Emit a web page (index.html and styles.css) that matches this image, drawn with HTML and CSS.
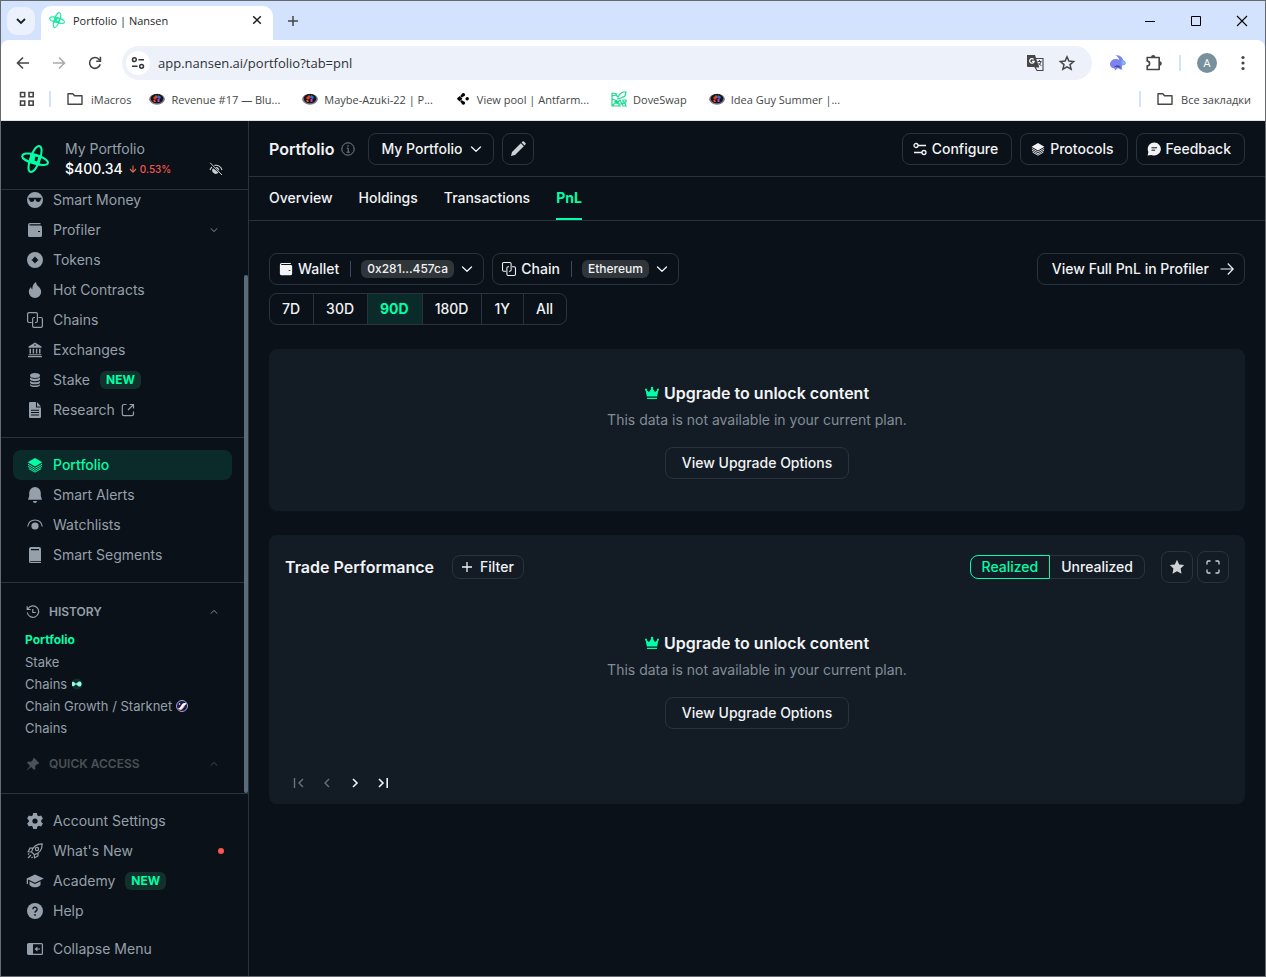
FILE: index.html
```html
<!DOCTYPE html>
<html lang="en">
<head>
<meta charset="utf-8">
<meta name="viewport" content="width=device-width, initial-scale=1">
<title>Portfolio | Nansen</title>
<link rel="stylesheet" href="styles.css">
</head>
<body>
<svg class="sprite" aria-hidden="true">
  <symbol id="logo" viewBox="0 0 28 28">
    <g fill="none" stroke="currentColor" stroke-width="2">
      <path d="M18.6 1.2C21.5 2 20.9 8 18.9 14.500C16.800 21.500 12.500 27.800 9.400 26.900C6.500 26 7.200 20 9.300 13.500C11.400 6.500 15.500 .3 18.600 1.200Z"/>
      <path d="M1.200 11C1.700 8 8 7.900 14.600 9.800C21.400 11.700 27.500 15.300 26.900 18.100C26.300 20.700 19.700 20.400 13.200 18.500C6.400 16.600 .700 13.500 1.200 11Z"/>
    </g>
    <path fill="currentColor" fill-rule="evenodd" d="M9.500 8.600L19.600 10.900L18.300 20L8 17.500ZM14.500 11.500L13.500 15.500L16 16.400L17.200 12.300Z"/>
  </symbol>
  <symbol id="folder" viewBox="0 0 16 16"><path d="M1 2.800h4.800l1.700 2H15v8.400H1z" fill="none" stroke="currentColor" stroke-width="1.400" stroke-linejoin="round"/></symbol>
  <symbol id="orb" viewBox="0 0 16 12"><ellipse cx="8" cy="6.200" rx="7.800" ry="5.500" fill="#777b80"/><ellipse cx="8" cy="5.600" rx="6.300" ry="4.700" fill="#17141a"/><path d="M4 5l3-3 2 2-3 3z" fill="#ef3b24"/><path d="M9 2l3 2-1 2-3-1z" fill="#2278d4"/><path d="M8.500 6l2 0 0 3-2 0z" fill="#c03cd6"/><path d="M4 7l2 0 1 2-2 0z" fill="#e2572e"/></symbol>
  <symbol id="chev-down" viewBox="0 0 12 12"><path d="M1.500 4l4.500 4.300L10.500 4" fill="none" stroke="currentColor" stroke-width="1.300" stroke-linecap="round" stroke-linejoin="round"/></symbol>
  <symbol id="chev-up" viewBox="0 0 12 12"><path d="M1.500 8l4.500-4.300L10.500 8" fill="none" stroke="currentColor" stroke-width="1.300" stroke-linecap="round" stroke-linejoin="round"/></symbol>
  <symbol id="wallet" viewBox="0 0 16 16"><path fill="currentColor" fill-rule="evenodd" d="M3 1h10.500v1.200H3a.5.5 0 0 0 0 1.200h10.500A1.500 1.500 0 0 1 15 4.900v8.600a1.500 1.500 0 0 1-1.500 1.500h-11A1.500 1.500 0 0 1 1 13.500V3a2 2 0 0 1 2-2zm8 8v1h2V9z"/></symbol>
  <symbol id="chains" viewBox="0 0 16 16"><g fill="none" stroke="currentColor" stroke-width="1.200"><path d="M4.800 10.500H2A1.400 1.400 0 0 1 .6 9.100V2A1.400 1.400 0 0 1 2 .6h7A1.400 1.400 0 0 1 10.400 2v7.100a1.400 1.400 0 0 1-1.400 1.400H8"/><path d="M11.500 5.500H14A1.400 1.400 0 0 1 15.400 6.900V14a1.400 1.400 0 0 1-1.400 1.400H7A1.400 1.400 0 0 1 5.600 14V6.900A1.400 1.400 0 0 1 7 5.500h1"/></g></symbol>
  <symbol id="layers" viewBox="0 0 16 16"><path fill="currentColor" d="M8 1l7.300 4.300L8 9.600.7 5.300z"/><g fill="none" stroke="currentColor" stroke-width="1"><path d="M1 7.300l7 4.100 7-4.100M1 9.300l7 4.100 7-4.100M1.800 11.600l6.200 3.500 6.200-3.500"/></g></symbol>
  <symbol id="crown" viewBox="0 0 14 14"><path fill="currentColor" d="M1.700 4.300L4 6 6.300 2.700a1.100 1.100 0 1 1 1.400 0L10 6l2.300-1.700a1 1 0 1 1 1 .3L12.200 10.500H1.800L.7 4.600a1 1 0 1 1 1-.3zM2 11.700h10V13H2z"/></symbol>
</svg>

<div class="window">
  <header class="browser">
    <div class="tabstrip">
      <button class="tab-search" aria-label="Search tabs"><svg class="i12" viewBox="0 0 12 12"><path d="M2 4l4 4 4-4" fill="none" stroke="#1f1f1f" stroke-width="1.800"/></svg></button>
      <div class="tab">
        <svg class="i16 brand-fav"><use href="#logo"/></svg>
        <span class="tab-title">Portfolio | Nansen</span>
        <button class="tab-close" aria-label="Close tab"><svg class="i12" viewBox="0 0 12 12"><path d="M2.200 2.200l7.600 7.600M9.800 2.200l-7.600 7.600" stroke="#1f1f1f" stroke-width="1.500"/></svg></button>
      </div>
      <button class="new-tab" aria-label="New tab"><svg class="i12" viewBox="0 0 12 12"><path d="M6 1v10M1 6h10" stroke="#444746" stroke-width="1.500"/></svg></button>
      <div class="win-controls">
        <button aria-label="Minimize"><svg class="i12" viewBox="0 0 12 12"><path d="M1 6.500h10" stroke="#000"/></svg></button>
        <button aria-label="Maximize"><svg class="i12" viewBox="0 0 12 12"><path d="M1.500 1.500h9v9h-9z" fill="none" stroke="#000"/></svg></button>
        <button aria-label="Close"><svg class="i12" viewBox="0 0 12 12"><path d="M1 1l10 10M11 1L1 11" stroke="#000" stroke-width="1.100"/></svg></button>
      </div>
    </div>
    <div class="toolbar">
      <button class="tool" aria-label="Back"><svg class="i16" viewBox="0 0 16 16"><path d="M14 8H3M8 2.500L2.500 8 8 13.500" fill="none" stroke="currentColor" stroke-width="1.600"/></svg></button>
      <button class="tool dim" aria-label="Forward"><svg class="i16" viewBox="0 0 16 16"><path d="M2 8h11M8 2.500L13.500 8 8 13.500" fill="none" stroke="currentColor" stroke-width="1.600"/></svg></button>
      <button class="tool" aria-label="Reload"><svg class="i16" viewBox="0 0 16 16"><path d="M13.200 9.200A5.400 5.400 0 1 1 12.300 4.700L13 5.500" fill="none" stroke="currentColor" stroke-width="1.600"/><path d="M13.400 1.800v4.400H9.200" fill="none" stroke="currentColor" stroke-width="1.600"/></svg></button>
      <div class="address">
        <button class="site-info" aria-label="Site information"><svg class="i14" viewBox="0 0 14 14"><g fill="none" stroke="#333" stroke-width="1.500"><circle cx="3.400" cy="3.700" r="1.900"/><path d="M7.500 3.700h5.500M1 10.300h5.500"/><circle cx="10.600" cy="10.300" r="1.900"/></g></svg></button>
        <input type="text" aria-label="Address" value="app.nansen.ai/portfolio?tab=pnl">
        <button class="tool" aria-label="Translate"><svg class="i18" viewBox="0 0 18 18"><path d="M1 1h8l4 12H2a1 1 0 0 1-1-1z" fill="#444746"/><path d="M9.500 4.500H17v12h-6l-2-3.500h3.500z" fill="#eef2fb" stroke="#444746" stroke-width="1.100"/><path d="M7.600 5.300A2.300 2.300 0 1 0 8.200 7.400H6" fill="none" stroke="#fff" stroke-width="1.200"/><path d="M11.500 7.500h4M13.500 6v1.500M15 7.500c-.5 2.500-2 3.500-3 4M12.500 9l3 3" fill="none" stroke="#444746"/></svg></button>
        <button class="tool" aria-label="Bookmark this tab"><svg class="i18" viewBox="0 0 18 18"><path d="M9 2.800l1.900 4.300 4.700.4-3.600 3.100 1.100 4.600L9 12.800l-4.100 2.400L6 10.600 2.400 7.500l4.700-.4z" fill="none" stroke="currentColor" stroke-width="1.500"/></svg></button>
      </div>
      <button class="tool ext" aria-label="Wallet extension"><svg class="i18" viewBox="0 0 18 18"><path d="M6.500 1.200C11 .8 13.500 3 14.200 6.200c1.700.4 2.700 1.700 2.500 3.500-.8 1.300-2 1.800-3.400 1.600-.6 1.500-.7 3 .2 4.200h-2.300c-.5-.7-1.200-1.200-2.200-1.300-1.300 0-1.700 1.800-3.300 2.300.3-.9.200-1.400-.3-1.900C2.800 14 .6 12.400 1 9.300c.7-2.700 3-4.600 5.800-4.400 1.300.1 2.600.4 3.500 1C9.700 4 8.500 2.400 6.500 1.200z" fill="#7b84ef"/><path d="M12.500 6.500c1.600-.4 3.800.6 4.100 2.800-.7 1.600-2.500 2.100-4 1.300z" fill="#7db6ee"/><path d="M5 13c1.500-1.600 4-2.300 6-1l.6 2.300C9.500 12.800 7.300 13.500 5 13z" fill="#4c4bb0"/></svg></button>
      <button class="tool puzzle" aria-label="Extensions"><svg class="i18" viewBox="0 0 18 18"><path d="M2.200 3.500H14.200V15.500H2.200V11.900a2.200 2.200 0 0 0 0-4.800z" fill="none" stroke="currentColor" stroke-width="1.600" stroke-linejoin="round"/><path d="M6 3.200a2.200 2.200 0 0 1 4.400 0zM14.600 7.300a2.200 2.200 0 0 1 0 4.400z" fill="currentColor"/></svg></button>
      <span class="v-rule"></span>
      <button class="avatar" aria-label="Profile">A</button>
      <button class="tool menu-dots" aria-label="Chrome menu"><svg class="i18" viewBox="0 0 18 18"><g fill="currentColor"><circle cx="9" cy="3.500" r="1.600"/><circle cx="9" cy="9" r="1.600"/><circle cx="9" cy="14.500" r="1.600"/></g></svg></button>
    </div>
    <nav class="bookmarks" aria-label="Bookmarks">
      <button class="apps" aria-label="Apps"><svg class="i16" viewBox="0 0 16 16"><g fill="none" stroke="#444746" stroke-width="1.600"><path d="M1.500 1.500h4.200v4.200H1.500zM10 1.500h4.200v4.200H10zM1.500 10h4.200v4.200H1.500zM10 10h4.200v4.200H10z"/></g></svg></button>
      <span class="v-rule"></span>
      <a class="bm first" href="#"><svg class="i16"><use href="#folder"/></svg>iMacros</a>
      <a class="bm" href="#"><svg class="orb"><use href="#orb"/></svg>Revenue #17 — Blu...</a>
      <a class="bm" href="#"><svg class="orb"><use href="#orb"/></svg>Maybe-Azuki-22 | P...</a>
      <a class="bm" href="#"><svg class="i16" viewBox="0 0 16 16"><path d="M8.300 3.600L6 5.800M6 9.800l2.300 2.200" stroke="#000" stroke-width="2.400"/><path d="M1.800 7.800L4.600 5l2.800 2.800-2.800 2.800z" fill="#000"/><circle cx="8.300" cy="3.700" r="1.800"/><circle cx="8.300" cy="12" r="1.800"/><circle cx="12.200" cy="7.800" r="1.700"/></svg>View pool | Antfarm...</a>
      <a class="bm" href="#"><svg class="i16" viewBox="0 0 16 16"><g fill="none" stroke="#1bd991" stroke-width="1.200"><path d="M1 2v13h9M1 2l5 1M1 5l4-1 2 2 2-3 3-2h3l-1 4-4 2-4 1M1 8l3 1 3 2 2-2 2 4h-3l-3-2-4 4M12 9h3v2h-3zM11 13l3-1 1 3h-3zM8 13v2"/></g><path d="M3 10l3-1 2 3-3 1z" fill="#1bd991"/></svg>DoveSwap</a>
      <a class="bm" href="#"><svg class="orb"><use href="#orb"/></svg>Idea Guy Summer |...</a>
      <span class="v-rule push"></span>
      <a class="bm last" href="#"><svg class="i16"><use href="#folder"/></svg>Все закладки</a>
    </nav>
  </header>

  <div class="app">
    <aside class="sidebar">
      <div class="account">
        <svg class="brand"><use href="#logo"/></svg>
        <div class="account-text">
          <div class="account-name">My Portfolio</div>
          <div class="account-value"><strong>$400.34</strong>
            <svg class="i8" viewBox="0 0 8 8"><path d="M4 .5v6.500M1 4l3 3.200L7 4" fill="none" stroke="#e0684a" stroke-width="1.100"/></svg>
            <span class="change">0.53%</span></div>
        </div>
        <button class="hide-balance" aria-label="Hide balance"><svg class="i14" viewBox="0 0 14 14"><path d="M1 8a6.500 6.500 0 0 1 2-3M5.500 3.400A6.200 6.200 0 0 1 13 8" fill="none" stroke="#c9ced3" stroke-width="1.100"/><path d="M4.100 6.200A3.200 3.200 0 1 0 9.500 10.600z" fill="#c9ced3"/><path d="M6.500 5.200A3 3 0 0 1 10.200 8.800z" fill="#c9ced3"/><path d="M1.200.8L13 13" stroke="#c9ced3"/></svg></button>
      </div>

      <div class="scroller">
        <nav class="group clipped">
          <a class="row" href="#"><svg class="i16" viewBox="0 0 16 16"><path fill="currentColor" fill-rule="evenodd" d="M8 0a8 8 0 1 1 0 16A8 8 0 0 1 8 0zM1.600 5.700v1.500h.7C2.500 9 3.300 10 4.800 10 6.400 10 7.200 9 7.500 7.200h1C8.800 9 9.600 10 11.200 10c1.500 0 2.300-1 2.500-2.800h.7V5.700z"/></svg>Smart Money</a>
          <a class="row" href="#"><svg class="i16"><use href="#wallet"/></svg>Profiler<svg class="i8 end"><use href="#chev-down"/></svg></a>
          <a class="row" href="#"><svg class="i16" viewBox="0 0 16 16"><path fill="currentColor" fill-rule="evenodd" d="M8 0a8 8 0 1 1 0 16A8 8 0 0 1 8 0zm0 4.200C7.200 6.200 6.200 7.200 4.200 8c2 .8 3 1.800 3.800 3.800.8-2 1.800-3 3.800-3.800-2-.8-3-1.800-3.800-3.800z"/><circle cx="8" cy="8" r="2.400" fill="#0b1118"/></svg>Tokens</a>
          <a class="row" href="#"><svg class="i16" viewBox="0 0 16 16"><path fill="currentColor" d="M9 0c.3 2.200 1.200 3.300 2.500 4.600C13.200 6.300 14.200 8 14.200 10A6.200 6.200 0 0 1 8 16a6.200 6.200 0 0 1-6.200-6.200C1.800 8 2.700 6.300 4 5c.2 1.200.6 1.900 1.300 2.500C5.200 4.500 6.300 1.600 9 0z"/></svg>Hot Contracts</a>
          <a class="row" href="#"><svg class="i16"><use href="#chains"/></svg>Chains</a>
          <a class="row" href="#"><svg class="i16" viewBox="0 0 16 16"><path fill="currentColor" fill-rule="evenodd" d="M8 .5l6.500 4v1.300h-13V4.500zm0 1.800a.8.8 0 1 0 0 1.600.8.8 0 0 0 0-1.600zM2.500 6.800h1.500v4.700H2.500zM5.700 6.800h1.400v4.700H5.700zM8.900 6.800h1.400v4.700H8.900zM12 6.800h1.500v4.700H12zM1.700 12.200h12.600v1H1.700zM1 14h14v1.200H1z"/></svg>Exchanges</a>
          <a class="row" href="#"><svg class="i16" viewBox="0 0 16 16"><g fill="currentColor"><ellipse cx="8" cy="3.400" rx="5" ry="2.500"/><path d="M3 5.500c2 1.700 8 1.700 10 0v1.700c0 2.600-10 2.600-10 0zM3 9c2 1.700 8 1.700 10 0v1.400c0 2.600-10 2.600-10 0zM3 12.200c2 1.700 8 1.700 10 0v.8c0 2.700-10 2.700-10 0z"/></g></svg>Stake<span class="badge">NEW</span></a>
          <a class="row" href="#"><svg class="i16" viewBox="0 0 16 16"><path fill="currentColor" fill-rule="evenodd" d="M3.300 0H9v5.500h5v9.200a1.300 1.300 0 0 1-1.300 1.300H3.300A1.300 1.300 0 0 1 2 14.700V1.300A1.300 1.300 0 0 1 3.300 0zM10 0l4 4.500h-4zM4 7.700v1h8v-1zm0 2.400v1h8v-1zm0 2.400v1h8v-1z"/></svg>Research<svg class="i14 ext-link" viewBox="0 0 14 14"><g fill="none" stroke="currentColor" stroke-width="1.200"><path d="M5.500 1.500H3A1.700 1.700 0 0 0 1.300 3.200V11A1.700 1.700 0 0 0 3 12.700h7.800A1.700 1.700 0 0 0 12.500 11V8.500M8.500 1.500h4v4M12.500 1.500L7 7"/></g></svg></a>
        </nav>
        <nav class="group">
          <a class="row active" href="#"><svg class="i16"><use href="#layers"/></svg>Portfolio</a>
          <a class="row" href="#"><svg class="i16" viewBox="0 0 16 16"><path fill="currentColor" d="M8 0a5.800 5.800 0 0 1 5.800 5.800V9l1.200 3.800H1L2.200 9V5.800A5.800 5.800 0 0 1 8 0zM6 14h4a2 2 0 0 1-4 0z"/></svg>Smart Alerts</a>
          <a class="row" href="#"><svg class="i16" viewBox="0 0 16 16"><path d="M.7 9.500C1.400 5.500 4.200 3 8 3s6.600 2.500 7.300 6.500" fill="none" stroke="currentColor" stroke-width="1.200"/><circle cx="8" cy="9" r="3.600" fill="currentColor"/></svg>Watchlists</a>
          <a class="row" href="#"><svg class="i16" viewBox="0 0 16 16"><path fill="currentColor" fill-rule="evenodd" d="M4 0h8a2 2 0 0 1 2 2v11.900H3.500c-.5 0-.5.9 0 .9H14V16H3.500A1.500 1.500 0 0 1 2 14.500V2a2 2 0 0 1 2-2zm0 2v1.300h8V2z"/></svg>Smart Segments</a>
        </nav>
        <section class="history">
          <button class="section-head"><svg class="i14" viewBox="0 0 14 14"><g fill="none" stroke="currentColor" stroke-width="1.200"><path d="M2 3.700A5.700 5.700 0 1 1 1.300 7.500M1.200 1.200v3.300h3.400M6.800 4v3.500h3"/></g></svg>HISTORY<svg class="i8 end"><use href="#chev-up"/></svg></button>
          <a class="small current" href="#">Portfolio</a>
          <a class="small" href="#">Stake</a>
          <a class="small" href="#">Chains<svg class="i12" viewBox="0 0 12 12"><circle cx="6" cy="6" r="5.600" fill="#0d2f2b"/><path d="M1 4.200c1-.9 2.200 0 3 .9 1 1 1.600.4 2.600-.6 1-1.300 3.600-2 4 1.500-.4 3.500-3 2.800-4 1.500-1-1-1.600-1.600-2.600-.6-.8.900-2 1.800-3 .9z" fill="#97fce4"/></svg></a>
          <a class="small" href="#">Chain Growth / Starknet<svg class="i12" viewBox="0 0 12 12"><circle cx="6" cy="6" r="5.500" fill="#17174f" stroke="#c7c9e8" stroke-width=".8"/><path d="M1.500 8.500C5 9 5 3 8.500 3c1.200 0 2 .4 2.200.8C8.500 4.500 8 9 4.500 10z" fill="#fff"/><path d="M3 10c3 0 4.500-2.500 5.500-5" fill="none" stroke="#ec796b" stroke-width=".7"/><circle cx="3.500" cy="4" r=".8" fill="#fff"/></svg></a>
          <a class="small" href="#">Chains</a>
          <button class="section-head faded"><svg class="i14" viewBox="0 0 14 14"><path fill="currentColor" d="M8 .8l5.200 5.200-1.200 1.200-.8-.2-2 2 .2 2.800-1.200 1.200-3.100-3.100L1 13.300l-.3-.3 3.400-4.100L1 5.800l1.200-1.200 2.800.2 2-2L6.800 2z"/></svg>QUICK ACCESS<svg class="i8 end"><use href="#chev-up"/></svg></button>
        </section>
        <span class="thumb"></span>
      </div>

      <nav class="sidebar-foot">
        <a class="row" href="#"><svg class="i16" viewBox="0 0 16 16"><path fill="currentColor" fill-rule="evenodd" d="M6.200 0h3.600l.5 2.300 1.500.9 2.300-.7 1.800 3.100L14.200 7.200v1.700l1.700 1.600-1.800 3-2.300-.7-1.500.9L9.800 16H6.200l-.5-2.300-1.500-.9-2.300.7-1.800-3L1.800 8.900V7.200L.1 5.600l1.800-3.100 2.300.7 1.500-.9zM8 5.400A2.600 2.600 0 1 0 8 10.600 2.600 2.600 0 0 0 8 5.400z"/></svg>Account Settings</a>
        <a class="row" href="#"><svg class="i16" viewBox="0 0 16 16"><g fill="none" stroke="currentColor" stroke-width="1.200"><path d="M4.500 9C5.500 4.500 9 .9 15.200.8 15.200 6.500 12 10.500 7.300 11.700zM6 5.200H3L1.200 8.800l3.300.2M11 10v3l-3.500 1.800-.2-3.100M1 11.500l1.200-1M1 15l3-3M4.500 15l1.200-1.200"/><circle cx="10" cy="6" r="1.600"/></g></svg>What's New<span class="dot"></span></a>
        <a class="row" href="#"><svg class="i18 cap" viewBox="0 0 18 18"><path fill="currentColor" d="M9 2.500L17.800 6.600 9 10.800 2 7.400V12H.7V6.500zM3.500 9.300L9 12l5.500-2.700v3.600c-2.500 3.100-8.500 3.100-11 0z"/></svg>Academy<span class="badge">NEW</span></a>
        <a class="row" href="#"><svg class="i16" viewBox="0 0 16 16"><circle cx="8" cy="8" r="8" fill="currentColor"/><path d="M5.900 6.200a2.100 2.100 0 1 1 3.300 1.700C8.300 8.500 8 8.900 8 9.800" fill="none" stroke="#0b1118" stroke-width="1.300"/><circle cx="8" cy="11.900" r=".9" fill="#0b1118"/></svg>Help</a>
        <button class="row collapse"><svg class="i16" viewBox="0 0 16 16"><rect x=".6" y="2.600" width="14.800" height="10.800" rx="1" fill="none" stroke="currentColor" stroke-width="1.200"/><path fill="currentColor" d="M1 3h5v10H1zM7.500 8l3-2.500v2H13v1h-2.500v2z"/></svg>Collapse Menu</button>
      </nav>
    </aside>

    <main class="main">
      <div class="page-head">
        <h1>Portfolio</h1>
        <svg class="i14 info" viewBox="0 0 14 14"><circle cx="7" cy="7" r="6.200" fill="none" stroke="currentColor"/><path d="M5.800 6.200h1.400v4M5.600 10.200h3.200" fill="none" stroke="currentColor"/><circle cx="7" cy="4" r=".8" fill="currentColor"/></svg>
        <label class="btn picker"><select aria-label="Portfolio"><option>My Portfolio</option></select><svg class="i12"><use href="#chev-down"/></svg></label>
        <button class="btn square" aria-label="Edit portfolio"><svg class="i16" viewBox="0 0 16 16"><path fill="currentColor" d="M10.800 2.200l3 3L5 14l-4 1 1-4zM11.600 1.500l.9-.9a1 1 0 0 1 1.400 0l1.500 1.500a1 1 0 0 1 0 1.400l-.9.900z"/></svg></button>
        <div class="head-actions">
          <button class="btn tight"><svg class="i14" viewBox="0 0 14 14"><g fill="none" stroke="currentColor" stroke-width="1.300"><circle cx="3" cy="3.500" r="2"/><path d="M5 3.500h8M1 10.500h8"/><circle cx="11" cy="10.500" r="2"/></g></svg>Configure</button>
          <button class="btn tight"><svg class="i14"><use href="#layers"/></svg>Protocols</button>
          <button class="btn tight"><svg class="i14" viewBox="0 0 14 14"><path fill="currentColor" d="M7.300.5a6.500 6.500 0 1 1-2.700 12.400L.6 13.500l.8-3.600A6.500 6.500 0 0 1 7.300.5z"/><path d="M4.500 5.800h5.500M4.500 8.200h3.600" stroke="#0b1118"/></svg>Feedback</button>
        </div>
      </div>
      <nav class="tabs">
        <a href="#">Overview</a><a href="#">Holdings</a><a href="#">Transactions</a><a class="on" href="#">PnL</a>
      </nav>
      <div class="content">
        <div class="filters">
          <label class="btn filter"><svg class="i14"><use href="#wallet"/></svg>Wallet<span class="bar"></span><select class="chip"><option>0x281...457ca</option></select><svg class="i12"><use href="#chev-down"/></svg></label>
          <label class="btn filter"><svg class="i14"><use href="#chains"/></svg>Chain<span class="bar"></span><select class="chip"><option>Ethereum</option></select><svg class="i12"><use href="#chev-down"/></svg></label>
          <a class="btn profiler" href="#">View Full PnL in Profiler<svg class="i14" viewBox="0 0 14 14"><path d="M.5 7h12.500M7.800 1.500L13.200 7l-5.400 5.500" fill="none" stroke="currentColor" stroke-width="1.200"/></svg></a>
        </div>
        <div class="range">
          <button>7D</button><button>30D</button><button class="on" aria-pressed="true">90D</button><button>180D</button><button>1Y</button><button>All</button>
        </div>
        <section class="card">
          <div class="upsell">
            <h2><svg class="i14 crown"><use href="#crown"/></svg>Upgrade to unlock content</h2>
            <p>This data is not available in your current plan.</p>
            <a class="btn" href="#">View Upgrade Options</a>
          </div>
        </section>
        <section class="card trade">
          <div class="card-head">
            <h2>Trade Performance</h2>
            <button class="btn small-btn"><svg class="i10" viewBox="0 0 10 10"><path d="M5 0v10M0 5h10" stroke="currentColor" stroke-width="1.300"/></svg>Filter</button>
            <div class="toggle"><button class="on" aria-pressed="true">Realized</button><button>Unrealized</button></div>
            <div class="icon-pair">
              <button class="btn square" aria-label="Favourite"><svg class="i16" viewBox="0 0 16 16"><path fill="currentColor" d="M8 .8l2.200 4.600 5 .7-3.600 3.500.9 5.100L8 12.200l-4.500 2.500.9-5.100L.8 6.100l5-.7z"/></svg></button>
              <button class="btn square" aria-label="Full screen"><svg class="i14" viewBox="0 0 14 14"><path d="M1 4.500V2.200A1.200 1.200 0 0 1 2.200 1h2.300M9.500 1h2.300A1.200 1.200 0 0 1 13 2.200v2.300M13 9.500v2.300a1.200 1.200 0 0 1-1.200 1.200H9.500M4.500 13H2.200A1.200 1.200 0 0 1 1 11.800V9.500" fill="none" stroke="currentColor" stroke-width="1.300"/></svg></button>
            </div>
          </div>
          <div class="upsell">
            <h2><svg class="i14 crown"><use href="#crown"/></svg>Upgrade to unlock content</h2>
            <p>This data is not available in your current plan.</p>
            <a class="btn" href="#">View Upgrade Options</a>
          </div>
          <div class="pager">
            <button disabled aria-label="First page"><svg class="i12" viewBox="0 0 12 12"><path d="M1.500 1v10M10 2L6 6l4 4" fill="none" stroke="currentColor" stroke-width="1.400"/></svg></button>
            <button disabled aria-label="Previous page"><svg class="i12" viewBox="0 0 12 12"><path d="M8 2L4 6l4 4" fill="none" stroke="currentColor" stroke-width="1.400"/></svg></button>
            <button aria-label="Next page"><svg class="i12" viewBox="0 0 12 12"><path d="M4 2l4 4-4 4" fill="none" stroke="currentColor" stroke-width="1.600"/></svg></button>
            <button aria-label="Last page"><svg class="i12" viewBox="0 0 12 12"><path d="M2 2l4 4-4 4M10.200 1v10" fill="none" stroke="currentColor" stroke-width="1.600"/></svg></button>
          </div>
        </section>
      </div>
    </main>
  </div>
</div>
</body>
</html>
```
FILE: styles.css
```css
*, *::before, *::after { box-sizing: border-box; }

:root {
  --bg: #0b1118;
  --card: #131c25;
  --line: #2a333d;
  --muted: #95a0ab;
  --text: #f1f3f5;
  --green: #00ffa7;
}

body { margin: 0; background: var(--bg); }
button, input, select { font: inherit; color: inherit; background: none; border: 0; padding: 0; margin: 0; }
select { appearance: none; outline: none; }
a { color: inherit; text-decoration: none; }
h1, h2, p { margin: 0; }
svg { flex: none; display: block; }
.sprite { display: none; }
.i8 { width: 8px; height: 8px; }
.i10 { width: 10px; height: 10px; }
.i12 { width: 12px; height: 12px; }
.i14 { width: 14px; height: 14px; }
.i16 { width: 16px; height: 16px; }
.i18 { width: 18px; height: 18px; }

.window {
  min-height: 100vh;
  display: flex;
  flex-direction: column;
  border: 1px solid #66696e;
}

/* Browser frame */
.browser {
  background: #d3e3fd;
  color: #444746;
  font-family: "Open Sans", "Noto Sans", sans-serif;
  font-size: 11px;
  border-bottom: 1px solid #dfe3e8;
}
.tabstrip { display: flex; align-items: center; height: 39px; padding-left: 6px; }
.tab-search {
  width: 28px; height: 28px; border-radius: 10px; background: #ecf2fd;
  display: grid; place-items: center;
}
.tab {
  align-self: flex-end; display: flex; align-items: center; gap: 8px;
  width: 232px; height: 34px; margin-left: 6px; padding: 0 10px 6px 8px;
  background: #fff; border-radius: 10px 10px 0 0; color: #1f1f1f;
}
.brand-fav { color: #1de9a4; }
.tab-title { flex: 1; }
.new-tab { margin-left: 14px; }
.win-controls { margin-left: auto; display: flex; }
.win-controls button { width: 46px; height: 38px; display: grid; place-items: center; }
.toolbar {
  display: flex; align-items: center; height: 46px; padding: 0 13px;
  background: #fff; border-radius: 8px 8px 0 0;
}
.tool { display: grid; place-items: center; color: #444746; width: 18px; height: 28px; }
.toolbar > .tool { margin-right: 18px; }
.toolbar > .puzzle { margin-right: 16px; }
.dim { color: #a9abad; }
.address {
  flex: 1; display: flex; align-items: center; gap: 14px;
  height: 34px; margin-right: 17px; padding: 0 16px 0 4px;
  border-radius: 17px; background: #edf1fa;
}
.site-info { width: 24px; height: 24px; border-radius: 12px; background: #fff; display: grid; place-items: center; }
.address input { flex: 1; min-width: 0; margin-left: -6px; font-size: 13px; color: #303234; outline: none; }
.v-rule { width: 2px; height: 16px; background: #d3e3fd; }
.avatar {
  width: 20px; height: 20px; margin: 0 17px 0 16px; border-radius: 50%;
  background: #78909c; color: #fff; font-size: 11px; line-height: 20px; text-align: center;
}
.toolbar > .menu-dots { margin-right: 0; }
.bookmarks {
  display: flex; align-items: center; height: 34px; padding: 0 14px 8px 18px;
  background: #fff; white-space: nowrap;
}
.bm { display: flex; align-items: center; gap: 6px; margin-right: 22px; }
.bm.first { margin: 0 18px 0 16px; gap: 8px; }
.bm.last { margin: 0 0 0 16px; gap: 8px; }
.apps { margin-right: 14px; }
.push { margin-left: auto; }
.orb { width: 16px; height: 12px; }

/* Application */
.app {
  flex: 1; display: flex; background: var(--bg); color: var(--text);
  font-family: Inter, "Liberation Sans", sans-serif; font-size: 14px; line-height: 20px;
}
.sidebar {
  width: 248px; flex: none; display: flex; flex-direction: column;
  border-right: 1px solid var(--line); color: var(--muted);
}
.account {
  display: flex; align-items: center; height: 69px; padding: 8px 25px 0 20px;
  border-bottom: 1px solid var(--line);
}
.brand { width: 28px; height: 28px; color: var(--green); }
.account-text { margin-left: 16px; }
.account-value { display: flex; align-items: center; gap: 3px; }
.account-value strong { color: #fff; font-weight: 500; margin-right: 3px; }
.change { color: #f2564d; font-size: 10px; font-weight: 500; }
.hide-balance { margin: 20px 0 0 auto; }

.scroller { flex: 1; position: relative; overflow: hidden; }
.thumb { position: absolute; right: 0; top: 85px; bottom: 0; width: 4px; border-radius: 2px; background: #5b6b7a; }
.group { padding: 12px 16px 12px 12px; border-bottom: 1px solid var(--line); }
.group.clipped { margin-top: -17px; }
.row { display: flex; align-items: center; gap: 10px; width: 100%; height: 30px; padding: 0 14px; border-radius: 8px; }
.row.active { background: #0b2a2a; color: var(--green); font-weight: 500; }
.end { margin-left: auto; }
.badge {
  padding: 0 6px; border-radius: 6px; background: #12312c; color: var(--green);
  font-size: 12px; font-weight: 700; line-height: 18px;
}
.ext-link { margin-left: -4px; }
.history { padding: 16px 26px 16px 24px; font-size: 12px; }
.section-head {
  display: flex; align-items: center; gap: 9px; width: 100%; height: 26px; margin-bottom: 4px;
  padding: 0 4px 0 1px; font-weight: 600;
}
.small { display: flex; align-items: center; gap: 4px; height: 22px; font-size: 13px; }
.small.current { color: var(--green); font-size: 12px; font-weight: 700; }
.section-head.faded { margin: 12px 0 0; color: #4c5157; }
.sidebar-foot { padding: 12px 16px 12px 12px; border-top: 1px solid var(--line); }
.cap { margin: 0 -1px; }
.dot { width: 6px; height: 6px; margin: 0 -6px 0 auto; border-radius: 50%; background: #f9564c; }
.collapse { margin: 8px 0 0; }

.main { flex: 1; min-width: 0; font-weight: 500; }
.page-head { display: flex; align-items: center; height: 56px; padding: 0 20px; border-bottom: 1px solid var(--line); }
h1, h2 { font-size: 16px; line-height: 24px; font-weight: 600; }
.info { margin: 0 13px 0 7px; color: #79828b; }
.btn {
  display: inline-flex; align-items: center; gap: 6px; height: 32px; padding: 0 16px;
  border: 1px solid var(--line); border-radius: 8px; white-space: nowrap;
}
.square { width: 32px; padding: 0; justify-content: center; color: #cfd2d5; }
.picker { margin-right: 8px; padding: 0 11px 0 12px; gap: 8px; }
.head-actions { display: flex; gap: 8px; margin-left: auto; }
.tight { padding: 0 13px 0 10px; gap: 5px; }
.tabs { display: flex; gap: 26px; height: 44px; padding: 0 20px; border-bottom: 1px solid var(--line); }
.tabs a { line-height: 42px; border-bottom: 2px solid transparent; }
.tabs .on { color: var(--green); border-color: var(--green); font-weight: 700; }

.content { padding: 32px 20px; }
.filters { display: flex; gap: 8px; }
.filter { padding: 0 10px 0 9px; gap: 5px; }
.bar { width: 1px; height: 16px; margin: 0 5px 0 6px; background: #3d4560; }
.chip {
  margin-right: 2px; padding: 0 6px; border-radius: 6px; background: #30353a;
  font-size: 12px; line-height: 18px; height: 18px;
}
.profiler { margin-left: auto; padding: 0 10px 0 14px; gap: 11px; }
.range {
  display: flex; width: fit-content; height: 32px; margin-top: 8px;
  border: 1px solid var(--line); border-radius: 8px; overflow: hidden;
}
.range button { padding: 0 13px 0 12px; }
.range button + button { border-left: 1px solid var(--line); }
.range .on { background: #0b2a2a; color: var(--green); font-weight: 700; }
.card { margin-top: 24px; padding: 32px 16px; border-radius: 8px; background: var(--card); }
.upsell { display: flex; flex-direction: column; align-items: center; }
.upsell h2 { display: flex; align-items: center; gap: 5px; }
.crown { color: var(--green); }
.upsell p { margin: 5px 0 17px; color: #838d97; font-weight: 400; }
.trade { padding: 16px 16px 7px; }
.card-head { display: flex; align-items: center; margin-bottom: 48px; }
.small-btn { height: 24px; margin-left: 18px; padding: 0 9px; gap: 8px; }
.toggle { display: flex; margin-left: auto; }
.toggle button { height: 24px; padding: 0 11px; border: 1px solid var(--line); border-left: 0; border-radius: 0 8px 8px 0; }
.toggle .on { border: 1px solid var(--green); border-radius: 8px 0 0 8px; color: var(--green); }
.icon-pair { display: flex; gap: 4px; margin-left: 16px; }
.pager { display: flex; margin-top: 40px; }
.pager button { width: 28px; height: 28px; display: grid; place-items: center; }
.pager button:disabled { color: #69717a; }
```
